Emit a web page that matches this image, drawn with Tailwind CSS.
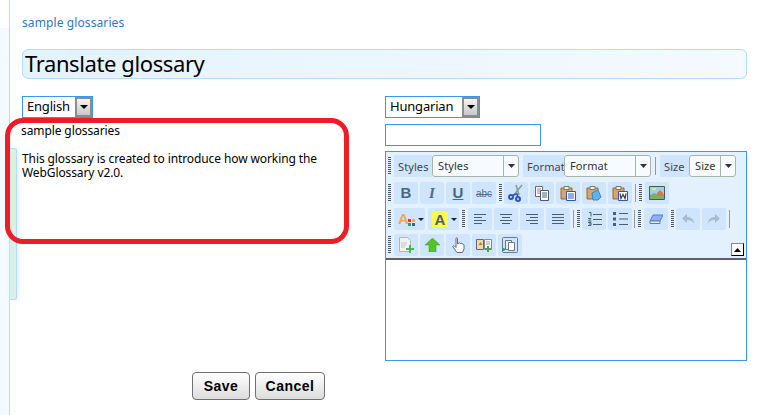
<!DOCTYPE html>
<html lang="en">
<head>
  <meta charset="UTF-8" />
  <title>Translate glossary</title>
  <script src="https://cdn.jsdelivr.net/npm/@tailwindcss/browser@4"></script>
</head>
<body class="bg-white h-[415px] overflow-hidden font-['Noto_Sans',sans-serif] text-black">
  <div class="relative h-[415px] pl-[22px] pr-[30px] overflow-hidden">
    <!-- left strip of the page frame -->
    <div class="absolute left-0 top-0 w-[10px] h-[415px] bg-[linear-gradient(#fff_28px,#f4faff_28px)] border-r border-[#b5dcfb]"></div>
    <div class="absolute left-[10px] top-[148px] w-[7px] h-[152px] bg-[#d9f0e4] border border-l-0 border-[#b5dcfb] rounded-r-[3px] shadow-[1px_0_5px_#d6ecff]"></div>

    <a href="#" class="relative block pt-[15px] h-[49px] text-[12px] leading-[16px] text-[#2a78cc] tracking-[0.1px]">sample glossaries</a>

    <h1 class="relative h-[30px] pl-[2px] text-[22px] leading-[27px] tracking-[-0.4px] border border-[#b5dcfb] rounded-[6px] bg-gradient-to-r from-[#e4f2fe] to-[#f4faff]">Translate glossary</h1>

    <div class="relative flex pt-[17px]">
      <!-- source language -->
      <div class="w-[363px] shrink-0">
        <div class="flex items-stretch w-[71px] h-[22px] border border-[#3a96f5]">
          <span class="flex-1 pl-[4px] text-[13px] leading-[19px] tracking-[-0.2px]">English</span>
          <span class="w-[17px] flex items-center justify-center border-2 border-[#8c8c8c] bg-gradient-to-b from-[#f4f4f4] to-[#c8c8c8]">
            <svg class="w-[8px] h-[4px]" viewBox="0 0 8 4"><path d="M0 0h8L4 4z" fill="#000"/></svg>
          </span>
        </div>
        <div class="-ml-px pt-[6px] text-[12px] leading-[14px] tracking-[-0.1px]">
          <p class="mb-[14px]">sample glossaries</p>
          <p class="w-[310px] pl-px">This glossary is created to introduce how working the WebGlossary v2.0.</p>
        </div>
      </div>

      <!-- target language -->
      <div class="w-[362px] shrink-0">
        <div class="flex items-stretch w-[95px] h-[22px] border border-[#3a96f5]">
          <span class="flex-1 pl-[4px] text-[13px] leading-[19px] tracking-[-0.2px]">Hungarian</span>
          <span class="w-[17px] flex items-center justify-center border-2 border-[#8c8c8c] bg-gradient-to-b from-[#f4f4f4] to-[#c8c8c8]">
            <svg class="w-[8px] h-[4px]" viewBox="0 0 8 4"><path d="M0 0h8L4 4z" fill="#000"/></svg>
          </span>
        </div>
        <div class="mt-[6px] w-[156px] h-[22px] border border-[#3a96f5]"></div>

        <!-- editor -->
        <div class="mt-[5px] h-[210px] border border-[#3a96f5] flex flex-col">
          <div class="relative h-[108px] bg-[#e3f1fe] border-b-2 border-[#5f5f5f] pl-[2px] pt-[3px] flex flex-col gap-[4px] text-[#333]">

            <!-- row 1 -->
            <div class="flex h-[22px] items-stretch text-[11px] leading-[23px] tracking-[0.1px]">
              <span class="w-[3px] my-[2px] bg-[repeating-linear-gradient(#555_0_1px,transparent_1px_2px)]"></span>
              <span class="ml-[3px] w-[38px] pl-[4px] bg-[#cfe5fe] text-[#444]">Styles</span>
              <span class="w-[87px] flex bg-[#f7fbff] border border-[#a9b4a8] rounded-[3px]"><span class="flex-1 pl-[5px] leading-[20px]">Styles</span><span class="w-[15px] flex items-center justify-center border-l border-[#a9b4a8]"><svg class="w-[7px] h-[4px]" viewBox="0 0 7 4"><path d="M0 0h7L3.500 4z" fill="#333"/></svg></span></span>
              <span class="ml-[4px] w-[41px] pl-[4px] bg-[#cfe5fe] text-[#444]">Format</span>
              <span class="w-[87px] flex bg-[#f7fbff] border border-[#a9b4a8] rounded-[3px]"><span class="flex-1 pl-[5px] leading-[20px]">Format</span><span class="w-[15px] flex items-center justify-center border-l border-[#a9b4a8]"><svg class="w-[7px] h-[4px]" viewBox="0 0 7 4"><path d="M0 0h7L3.500 4z" fill="#333"/></svg></span></span>
              <span class="ml-[4px] w-px my-[2px] bg-[#999]"></span>
              <span class="ml-[4px] w-[29px] pl-[4px] bg-[#cfe5fe] text-[#444]">Size</span>
              <span class="w-[47px] flex bg-[#f7fbff] border border-[#a9b4a8] rounded-[3px]"><span class="flex-1 pl-[5px] leading-[20px]">Size</span><span class="w-[15px] flex items-center justify-center border-l border-[#a9b4a8]"><svg class="w-[7px] h-[4px]" viewBox="0 0 7 4"><path d="M0 0h7L3.500 4z" fill="#333"/></svg></span></span>
            </div>

            <!-- row 2 -->
            <div class="flex h-[22px] mt-px items-stretch">
              <span class="w-[3px] my-[2px] bg-[repeating-linear-gradient(#555_0_1px,transparent_1px_2px)]"></span>
              <div class="ml-[3px] flex gap-[2px]">
                <span class="w-[24px] bg-[#cfe5fe] rounded-[2px] flex items-center justify-center text-[15px] font-bold text-[#446a7a] font-['Liberation_Sans',sans-serif]">B</span>
                <span class="w-[24px] bg-[#cfe5fe] rounded-[2px] flex items-center justify-center text-[15px] font-bold italic text-[#5a6a72] font-['Liberation_Serif',serif]">I</span>
                <span class="w-[24px] bg-[#cfe5fe] rounded-[2px] flex items-center justify-center text-[15px] font-bold underline text-[#446a7a] font-['Liberation_Sans',sans-serif]">U</span>
                <span class="w-[24px] bg-[#cfe5fe] rounded-[2px] flex items-center justify-center text-[10px] line-through text-[#5a7280] font-['Liberation_Sans',sans-serif]">abc</span>
              </div>
              <span class="ml-[3px] w-[3px] my-[2px] bg-[repeating-linear-gradient(#555_0_1px,transparent_1px_2px)]"></span>
              <div class="ml-[2px] flex gap-[2px]">
                <span class="w-[24px] bg-[#cfe5fe] rounded-[2px] flex items-center justify-center">
                  <svg class="w-[16px] h-[18px]" viewBox="0 0 16 18"><path d="M14 1L5 12M8 1l3 10" stroke="#8c98a0" stroke-width="1.500" fill="none"/><circle cx="3" cy="13" r="2" fill="none" stroke="#2f55c0" stroke-width="2"/><circle cx="10" cy="15" r="2" fill="none" stroke="#2f55c0" stroke-width="2"/><path d="M5 11l4-1 1 3" stroke="#2f55c0" stroke-width="1.500" fill="none"/></svg>
                </span>
                <span class="w-[24px] bg-[#cfe5fe] rounded-[2px] flex items-center justify-center">
                  <svg class="w-[16px] h-[16px]" viewBox="0 0 16 16"><path d="M1.500 1.500h7v10h-7z" fill="#fff" stroke="#667"/><path d="M3 4h4M3 6h4M3 8h4" stroke="#889"/><path d="M6.500 5.500h8v10h-8z" fill="#fff" stroke="#556"/><path d="M8 8h5M8 10h5M8 12h5" stroke="#3a6a70"/></svg>
                </span>
                <span class="w-[24px] bg-[#cfe5fe] rounded-[2px] flex items-center justify-center">
                  <svg class="w-[16px] h-[16px]" viewBox="0 0 16 16"><path d="M1 3h11v11H1z" fill="#d9a468" stroke="#96683a"/><path d="M4 1.500h5v3H4z" fill="#eee" stroke="#777"/><path d="M6.500 6.500h9v9h-9z" fill="#fff" stroke="#3057b8"/><path d="M8 9h6M8 11h6M8 13h6" stroke="#3057b8"/></svg>
                </span>
                <span class="w-[24px] bg-[#cfe5fe] rounded-[2px] flex items-center justify-center">
                  <svg class="w-[16px] h-[16px]" viewBox="0 0 16 16"><path d="M1 3h11v11H1z" fill="#d9a468" stroke="#96683a"/><path d="M4 1.500h5v3H4z" fill="#eee" stroke="#777"/><path d="M6 8l6-3 3 7-3 3H7z" fill="#5cb4e8" stroke="#3a88c0"/></svg>
                </span>
                <span class="w-[24px] bg-[#cfe5fe] rounded-[2px] flex items-center justify-center">
                  <svg class="w-[16px] h-[16px]" viewBox="0 0 16 16"><path d="M1 3h11v11H1z" fill="#d9a468" stroke="#96683a"/><path d="M4 1.500h5v3H4z" fill="#eee" stroke="#777"/><path d="M6.500 6.500h9v9h-9z" fill="#fff" stroke="#3057b8"/><path d="M8 8.500l1 5 2-4 2 4 1-5" stroke="#445" stroke-width="1.300" fill="none"/></svg>
                </span>
              </div>
              <span class="ml-[3px] w-px my-[2px] bg-[#999]"></span>
              <span class="ml-[3px] w-[3px] my-[2px] bg-[repeating-linear-gradient(#555_0_1px,transparent_1px_2px)]"></span>
              <span class="ml-[3px] w-[24px] bg-[#cfe5fe] rounded-[2px] flex items-center justify-center">
                <svg class="w-[16px] h-[14px]" viewBox="0 0 16 14"><path d="M.500.500h15v13H.500z" fill="#9cd0ea" stroke="#4a5a50"/><path d="M1 13V9l4-2 5 2 5-1v5z" fill="#7bb060"/><path d="M8 7l3-3 3 3v3H8z" fill="#d9784a"/><path d="M3 2h4v2H3z" fill="#f5e27a"/></svg>
              </span>
            </div>

            <!-- row 3 -->
            <div class="flex h-[22px] items-stretch">
              <span class="w-[3px] my-[2px] bg-[repeating-linear-gradient(#555_0_1px,transparent_1px_2px)]"></span>
              <span class="ml-[3px] w-[31px] bg-[#cfe5fe] rounded-[2px] flex items-center pl-[4px] gap-[1px]">
                <span class="relative w-[18px] h-[16px]">
                  <span class="block text-[15px] leading-[16px] font-bold text-[#f0a858] font-['Liberation_Sans',sans-serif]">A</span>
                  <svg class="absolute left-0 top-0 w-[18px] h-[16px]" viewBox="0 0 18 16"><path d="M10 8h3v3h-3z" fill="#d93a2a"/><path d="M14 8h3v3h-3z" fill="#f0b030"/><path d="M10 12h3v3h-3z" fill="#3aa040"/><path d="M14 12h3v3h-3z" fill="#3060c8"/></svg>
                </span>
                <svg class="w-[6px] h-[3px] ml-[1px]" viewBox="0 0 6 3"><path d="M0 0h6L3 3z" fill="#222"/></svg>
              </span>
              <span class="ml-[3px] w-[31px] bg-[#cfe5fe] rounded-[2px] flex items-center pl-[4px] gap-[3px]">
                <span class="w-[16px] h-[15px] bg-[#fbfb4a] flex items-center justify-center text-[15px] font-bold leading-[15px] text-[#4a6070] font-['Liberation_Sans',sans-serif]">A</span>
                <svg class="w-[6px] h-[3px]" viewBox="0 0 6 3"><path d="M0 0h6L3 3z" fill="#222"/></svg>
              </span>
              <span class="ml-[3px] w-[3px] my-[2px] bg-[repeating-linear-gradient(#555_0_1px,transparent_1px_2px)]"></span>
              <div class="ml-[3px] flex gap-[2px]">
                <span class="w-[24px] bg-[#cfe5fe] rounded-[2px] flex items-center justify-center"><svg class="w-[14px] h-[12px]" viewBox="0 0 14 12"><path d="M1 1.500h12M1 4.500h8M1 7.500h12M1 10.500h8" stroke="#4a6070"/></svg></span>
                <span class="w-[24px] bg-[#cfe5fe] rounded-[2px] flex items-center justify-center"><svg class="w-[14px] h-[12px]" viewBox="0 0 14 12"><path d="M1 1.500h12M3 4.500h8M1 7.500h12M3 10.500h8" stroke="#4a6070"/></svg></span>
                <span class="w-[24px] bg-[#cfe5fe] rounded-[2px] flex items-center justify-center"><svg class="w-[14px] h-[12px]" viewBox="0 0 14 12"><path d="M1 1.500h12M5 4.500h8M1 7.500h12M5 10.500h8" stroke="#4a6070"/></svg></span>
                <span class="w-[24px] bg-[#cfe5fe] rounded-[2px] flex items-center justify-center"><svg class="w-[14px] h-[12px]" viewBox="0 0 14 12"><path d="M1 1.500h12M1 4.500h12M1 7.500h12M1 10.500h12" stroke="#4a6070"/></svg></span>
              </div>
              <span class="ml-[3px] w-px my-[2px] bg-[#999]"></span>
              <span class="ml-[3px] w-[3px] my-[2px] bg-[repeating-linear-gradient(#555_0_1px,transparent_1px_2px)]"></span>
              <div class="ml-[2px] flex gap-[2px]">
                <span class="w-[24px] bg-[#cfe5fe] rounded-[2px] flex items-center justify-center"><svg class="w-[15px] h-[14px]" viewBox="0 0 15 14"><path d="M2 .500h2v4M1 6.500h3l-2.500 2.500h3M1 10.500h3v3H1M2 12h2" stroke="#4a6070" fill="none"/><path d="M6 2.500h9M6 7.500h9M6 12.500h9" stroke="#4a6070"/></svg></span>
                <span class="w-[24px] bg-[#cfe5fe] rounded-[2px] flex items-center justify-center"><svg class="w-[15px] h-[14px]" viewBox="0 0 15 14"><path d="M0 0h3v3H0zM0 5.500h3v3H0zM0 11h3v3H0z" fill="#4a6070"/><path d="M6 1.500h9M6 7h9M6 12.500h9" stroke="#4a6070"/></svg></span>
              </div>
              <span class="ml-[2px] w-px my-[2px] bg-[#999]"></span>
              <span class="ml-[3px] w-[3px] my-[2px] bg-[repeating-linear-gradient(#555_0_1px,transparent_1px_2px)]"></span>
              <span class="ml-[3px] w-[24px] bg-[#cfe5fe] rounded-[2px] flex items-center justify-center"><svg class="w-[14px] h-[10px]" viewBox="0 0 14 10"><path d="M4 1h10l-3 6H1z" fill="#8fb0ee" stroke="#5a7cc8"/><path d="M1 7h10v2.500H1z" fill="#e4ecfa" stroke="#5a7cc8"/></svg></span>
              <span class="ml-[3px] w-[3px] my-[2px] bg-[repeating-linear-gradient(#555_0_1px,transparent_1px_2px)]"></span>
              <div class="ml-[2px] flex gap-[2px]">
                <span class="w-[24px] bg-[#cfe5fe] rounded-[2px] flex items-center justify-center"><svg class="w-[12px] h-[10px]" viewBox="0 0 12 10"><path d="M5 0v3c4 0 7 2 7 7-1-3-3-4-7-4v3L0 4.500z" fill="#a9bccb"/></svg></span>
                <span class="w-[24px] bg-[#cfe5fe] rounded-[2px] flex items-center justify-center"><svg class="w-[12px] h-[10px]" viewBox="0 0 12 10"><path d="M7 0v3C3 3 0 5 0 10c1-3 3-4 7-4v3l5-4.500z" fill="#a9bccb"/></svg></span>
              </div>
              <span class="ml-[3px] w-px my-[2px] bg-[#999]"></span>
            </div>

            <!-- row 4 -->
            <div class="flex h-[22px] items-stretch">
              <span class="w-[3px] my-[2px] bg-[repeating-linear-gradient(#555_0_1px,transparent_1px_2px)]"></span>
              <div class="ml-[3px] flex gap-[2px]">
                <span class="w-[24px] bg-[#cfe5fe] rounded-[2px] flex items-center justify-center"><svg class="w-[16px] h-[16px]" viewBox="0 0 16 16"><path d="M1.500.500h8l3 3v11h-11z" fill="#f2f2f2" stroke="#b4b4b4"/><path d="M3 6h6M3 8h5M3 10h4" stroke="#c4c4c4"/><path d="M11 8v3H8v2h3v3h2v-3h3v-2h-3V8z" fill="#4fb54a"/></svg></span>
                <span class="w-[24px] bg-[#cfe5fe] rounded-[2px] flex items-center justify-center"><svg class="w-[15px] h-[14px]" viewBox="0 0 15 14"><path d="M7.500 0L15 7h-4v7H4V7H0z" fill="#52c22e" stroke="#3d9a22" stroke-width=".5"/></svg></span>
                <span class="w-[24px] bg-[#cfe5fe] rounded-[2px] flex items-center justify-center"><svg class="w-[13px] h-[16px]" viewBox="0 0 13 16"><path d="M4 1.500c0-1 1.500-1 1.500 0V7l1-.500V6c1-.5 1.500 0 1.500.5l1 0c1-.3 1.500.2 1.500.5l.5.200c.8 0 1 .5 1 1V12l-1.500 3.500H5L1 10c-.5-1 .5-1.800 1.500-1L4 10.500z" fill="#fff" stroke="#667"/></svg></span>
                <span class="w-[24px] bg-[#cfe5fe] rounded-[2px] flex items-center justify-center"><svg class="w-[16px] h-[14px]" viewBox="0 0 16 14"><path d="M.500 1.500h7v10h-7z" fill="#f0d9a8" stroke="#667"/><path d="M2.500 7l2-3 2 3z" fill="#b08030"/><path d="M8.500 1.500h7v10h-7z" fill="#f4f4f4" stroke="#889"/><path d="M10 4h4M10 6h4" stroke="#aaa"/><path d="M11 8v2H9v2h2v2h2v-2h2v-2h-2V8z" fill="#4fa050"/></svg></span>
                <span class="w-[24px] bg-[#cfe5fe] rounded-[2px] flex items-center justify-center"><svg class="w-[16px] h-[16px]" viewBox="0 0 16 16"><rect x=".500" y=".500" width="15" height="15" rx="1" fill="none" stroke="#667a88"/><path d="M3.500 3.500h6v9h-6z" fill="#e8eef4" stroke="#667a88"/><path d="M6.500 5.500h6v8h-6z" fill="#fff" stroke="#667a88"/><path d="M0 10l4 2.500L0 15z" fill="#3f9a50"/></svg></span>
              </div>
            </div>

            <!-- collapse toolbar -->
            <span class="absolute right-[2px] bottom-[2px] w-[13px] h-[13px] bg-white border border-[#888] border-r-black border-b-black flex items-center justify-center"><svg class="w-[7px] h-[4px]" viewBox="0 0 7 4"><path d="M0 4h7L3.500 0z" fill="#000"/></svg></span>
          </div>
          <div class="flex-1 bg-white"></div>
        </div>
      </div>
    </div>

    <!-- buttons -->
    <div class="relative flex gap-[5px] pl-[170px] pt-[11px] font-['Liberation_Sans',sans-serif]">
      <button class="w-[58px] h-[28px] rounded-[4px] border border-[#707070] bg-gradient-to-b from-white to-[#dcdcdc] text-[14px] font-bold tracking-[0.5px]">Save</button>
      <button class="w-[70px] h-[28px] rounded-[4px] border border-[#707070] bg-gradient-to-b from-white to-[#dcdcdc] text-[14px] font-bold tracking-[0.5px]">Cancel</button>
    </div>

    <!-- red annotation drawn over the screenshot -->
    <div class="absolute left-[5px] top-[118px] w-[344px] h-[126px] border-[5px] border-[#ee1c25] rounded-[18px] pointer-events-none"></div>
  </div>
</body>
</html>
